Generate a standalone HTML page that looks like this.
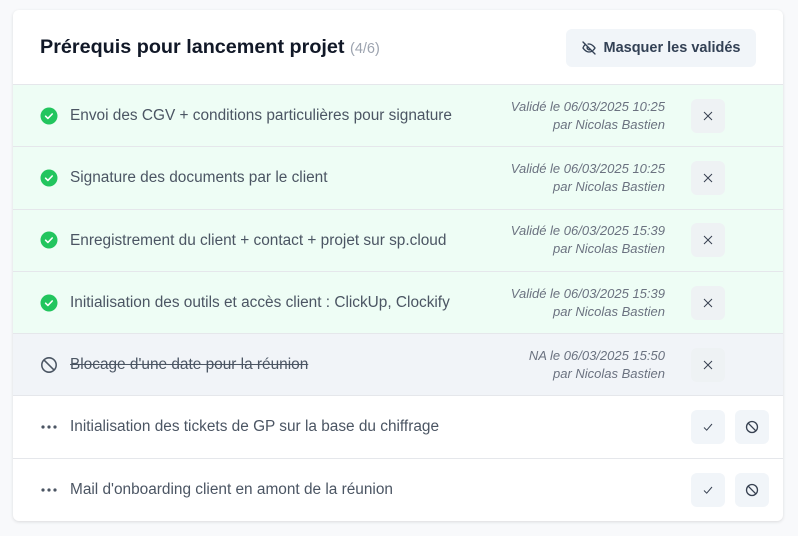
<!DOCTYPE html>
<html><head><meta charset="utf-8"><style>
*{box-sizing:border-box;margin:0;padding:0}
body{width:798px;height:536px;background:#f8f9fb;font-family:"Liberation Sans",sans-serif;position:relative;overflow:hidden}
.card{position:absolute;left:13px;top:10px;width:770px;height:511px;background:#fff;border-radius:6px;box-shadow:0 1px 3px rgba(0,0,0,.12);overflow:hidden}
.hdr{height:75px;border-bottom:1px solid #e5e7eb;position:relative}
.title{position:absolute;left:27px;top:26px;font-size:19.8px;font-weight:bold;color:#111827}
.title span{font-size:14.5px;font-weight:normal;color:#9ca3af}
.mbtn{position:absolute;left:553px;top:19px;width:190px;height:38px;background:#f1f5f9;border-radius:6px;font-size:14.5px;font-weight:bold;color:#334155;display:flex;align-items:center;justify-content:center;gap:6px}
.row{height:62.3px;border-bottom:1px solid #e5e7eb;position:relative;display:flex;align-items:center}
.row:last-child{border-bottom:none}
.g{background:#eefdf5}.n{background:#f1f4f8}
.ic{position:absolute;left:27px;top:50%;transform:translateY(-50%);width:18px;height:18px;display:flex;align-items:center;justify-content:center}
.txt{position:absolute;left:57px;top:22px;font-size:15.4px;color:#4b5563}
.meta{position:absolute;right:118px;text-align:right;font-size:13px;font-style:italic;color:#6b7280;line-height:18px}
.b{position:absolute;top:50%;transform:translateY(-50%);width:34px;height:34px;border-radius:6px;background:#f1f5f9;display:flex;align-items:center;justify-content:center}
.g .b,.n .b{background:#eef2f4}
</style></head><body>
<div class="card">
<div class="hdr"><div class="title">Prérequis pour lancement projet <span>(4/6)</span></div>
<div class="mbtn"><svg width="16" height="16" viewBox="0 0 24 24" fill="none" stroke="#334155" stroke-width="2" stroke-linecap="round"><path d="M3 3l18 18"/><path d="M10.6 6.1A10 10 0 0 1 12 6c5 0 9 6 9 6a17 17 0 0 1-2.6 3.2M6.6 6.6C4.3 8.2 3 12 3 12s4 6 9 6a9 9 0 0 0 5-1.5"/><path d="M9.9 9.9a3 3 0 0 0 4.2 4.2"/></svg>Masquer les validés</div></div>
<div class="row g"><div class="ic"><svg width="18" height="18" viewBox="0 0 18 18"><circle cx="9" cy="9" r="8.5" fill="#22c55e"/><path d="M5.6 9.2l2.3 2.2 4.3-4.4" fill="none" stroke="#fff" stroke-width="1.6" stroke-linecap="round" stroke-linejoin="round"/></svg></div><div class="txt">Envoi des CGV + conditions particulières pour signature</div><div class="meta">Validé le 06/03/2025 10:25<br>par Nicolas Bastien</div><div class="b" style="left:678px"><svg width="12" height="12" viewBox="0 0 12 12" stroke="#374151" stroke-width="1"><path d="M2 2l8 8M10 2l-8 8"/></svg></div></div>
<div class="row g"><div class="ic"><svg width="18" height="18" viewBox="0 0 18 18"><circle cx="9" cy="9" r="8.5" fill="#22c55e"/><path d="M5.6 9.2l2.3 2.2 4.3-4.4" fill="none" stroke="#fff" stroke-width="1.6" stroke-linecap="round" stroke-linejoin="round"/></svg></div><div class="txt">Signature des documents par le client</div><div class="meta">Validé le 06/03/2025 10:25<br>par Nicolas Bastien</div><div class="b" style="left:678px"><svg width="12" height="12" viewBox="0 0 12 12" stroke="#374151" stroke-width="1"><path d="M2 2l8 8M10 2l-8 8"/></svg></div></div>
<div class="row g"><div class="ic"><svg width="18" height="18" viewBox="0 0 18 18"><circle cx="9" cy="9" r="8.5" fill="#22c55e"/><path d="M5.6 9.2l2.3 2.2 4.3-4.4" fill="none" stroke="#fff" stroke-width="1.6" stroke-linecap="round" stroke-linejoin="round"/></svg></div><div class="txt">Enregistrement du client + contact + projet sur sp.cloud</div><div class="meta">Validé le 06/03/2025 15:39<br>par Nicolas Bastien</div><div class="b" style="left:678px"><svg width="12" height="12" viewBox="0 0 12 12" stroke="#374151" stroke-width="1"><path d="M2 2l8 8M10 2l-8 8"/></svg></div></div>
<div class="row g"><div class="ic"><svg width="18" height="18" viewBox="0 0 18 18"><circle cx="9" cy="9" r="8.5" fill="#22c55e"/><path d="M5.6 9.2l2.3 2.2 4.3-4.4" fill="none" stroke="#fff" stroke-width="1.6" stroke-linecap="round" stroke-linejoin="round"/></svg></div><div class="txt">Initialisation des outils et accès client : ClickUp, Clockify</div><div class="meta">Validé le 06/03/2025 15:39<br>par Nicolas Bastien</div><div class="b" style="left:678px"><svg width="12" height="12" viewBox="0 0 12 12" stroke="#374151" stroke-width="1"><path d="M2 2l8 8M10 2l-8 8"/></svg></div></div>
<div class="row n"><div class="ic"><svg width="20" height="20" viewBox="0 0 20 20" fill="none" stroke="#4b5563" stroke-width="1.7"><circle cx="10" cy="10" r="8"/><path d="M4.5 4.5l11 11"/></svg></div><div class="txt" style="text-decoration:line-through">Blocage d'une date pour la réunion</div><div class="meta">NA le 06/03/2025 15:50<br>par Nicolas Bastien</div><div class="b" style="left:678px"><svg width="12" height="12" viewBox="0 0 12 12" stroke="#374151" stroke-width="1"><path d="M2 2l8 8M10 2l-8 8"/></svg></div></div>
<div class="row"><div class="ic"><svg width="18" height="6" viewBox="0 0 18 6" fill="#4b5563"><circle cx="3" cy="3" r="1.6"/><circle cx="9" cy="3" r="1.6"/><circle cx="15" cy="3" r="1.6"/></svg></div><div class="txt">Initialisation des tickets de GP sur la base du chiffrage</div><div class="b" style="left:678px"><svg width="12" height="12" viewBox="0 0 12 12" fill="none" stroke="#374151" stroke-width="1"><path d="M2 6.5l2.7 2.7L10 3"/></svg></div><div class="b" style="left:722px"><svg width="14" height="14" viewBox="0 0 14 14" fill="none" stroke="#374151" stroke-width="1.3"><circle cx="7" cy="7" r="5.5"/><path d="M3.1 3.1l7.8 7.8"/></svg></div></div>
<div class="row"><div class="ic"><svg width="18" height="6" viewBox="0 0 18 6" fill="#4b5563"><circle cx="3" cy="3" r="1.6"/><circle cx="9" cy="3" r="1.6"/><circle cx="15" cy="3" r="1.6"/></svg></div><div class="txt">Mail d'onboarding client en amont de la réunion</div><div class="b" style="left:678px"><svg width="12" height="12" viewBox="0 0 12 12" fill="none" stroke="#374151" stroke-width="1"><path d="M2 6.5l2.7 2.7L10 3"/></svg></div><div class="b" style="left:722px"><svg width="14" height="14" viewBox="0 0 14 14" fill="none" stroke="#374151" stroke-width="1.3"><circle cx="7" cy="7" r="5.5"/><path d="M3.1 3.1l7.8 7.8"/></svg></div></div>
</div>
</body></html>
